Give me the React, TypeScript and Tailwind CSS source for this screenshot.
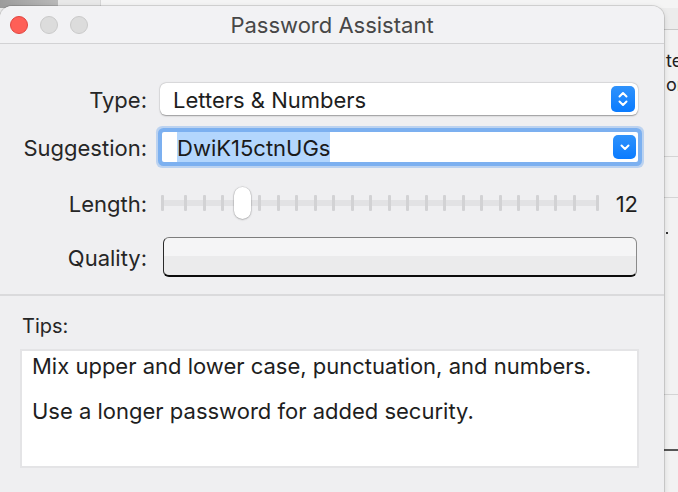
import React from "react";

const ticks = Array.from({ length: 22 });

const Label = ({ children }: { children: React.ReactNode }) => (
  <div className="w-[147px] shrink-0 pt-[2px] text-right text-[22px] text-[#262626] leading-none">{children}</div>
);

export default function App() {
  return (
    <div className="relative w-[678px] h-[492px] overflow-hidden bg-[#ececec] font-['Inter',sans-serif]">
      {/* desktop behind the sheet */}
      <div className="absolute left-0 top-0 h-[8px] w-[58px] bg-[linear-gradient(90deg,#9c9c9c,#b9b9b9)]" />
      <div className="absolute left-[58px] top-0 h-[8px] w-[42px] bg-[#e8e8e8]" />
      <div className="absolute left-[100px] top-0 h-[8px] w-[578px] border-l border-[#d6d6d6] bg-[#f4f4f4]" />
      <div className="absolute right-0 top-[29px] h-[463px] w-[14px] overflow-hidden bg-[#f2f2f2]">
        <div className="border-t border-[#c9c9c9]" />
        <div className="mt-[19px] whitespace-nowrap pl-[2px] text-[18px] leading-[24px] text-[#222]">te</div>
        <div className="mt-[2px] whitespace-nowrap pl-[2px] text-[18px] leading-[20px] text-[#222]">om</div>
        <div className="mt-[61px] border-t border-[#d4d4d4]" />
        <div className="mt-[40px] border-t border-[#d4d4d4]" />
        <div className="mt-[34px] ml-[2px] h-[2px] w-[2px] bg-[#333]" />
        <div className="mt-[160px] border-t border-[#d4d4d4]" />
        <div className="mt-[54px] border-t-2 border-[#555]" />
      </div>

      {/* sheet */}
      <div className="absolute left-0 top-[6px] flex h-[500px] w-[664px] flex-col overflow-hidden rounded-[12px] bg-[#efeff1] shadow-[0_0_0_1px_rgba(0,0,0,0.12),0_2px_6px_rgba(0,0,0,0.15)]">
        <div className="grid h-[38px] shrink-0 grid-cols-[1fr_auto_1fr] items-center border-b border-[#d2d2d4] bg-[#f2f2f4]">
          <div className="flex gap-[12px] pl-[10px]">
            <span className="h-[18px] w-[18px] rounded-full border border-[#e0443e] bg-[#fe5f57]" />
            <span className="h-[18px] w-[18px] rounded-full border border-[#c9c9c9] bg-[#dcdcdc]" />
            <span className="h-[18px] w-[18px] rounded-full border border-[#c9c9c9] bg-[#dcdcdc]" />
          </div>
          <div className="text-[22px] leading-none text-[#474747]">Password Assistant</div>
          <div />
        </div>

        <div className="flex flex-col pt-[39px] pb-[17px] pr-[26px]">
          {/* Type */}
          <div className="flex items-center">
            <Label>Type:</Label>
            <div className="ml-[13px] flex h-[32px] w-[478px] items-center justify-between rounded-[6px] bg-white pl-[13px] pr-[3px] shadow-[0_0.5px_1.5px_rgba(0,0,0,0.35),0_0_0_0.5px_rgba(0,0,0,0.06)]">
              <span className="pt-[2px] text-[22px] leading-none text-[#1e1e1e]">Letters &amp; Numbers</span>
              <span className="flex h-[26px] w-[24px] items-center justify-center rounded-[5px] bg-[linear-gradient(#2f92fb,#0a7bff)]">
                <svg width="12" height="18" viewBox="0 0 12 18" fill="none" stroke="white" strokeWidth="2" strokeLinecap="round" strokeLinejoin="round">
                  <path d="M2.5 6.5 6 3l3.5 3.5" />
                  <path d="M2.5 11.5 6 15l3.5-3.5" />
                </svg>
              </span>
            </div>
          </div>

          {/* Suggestion */}
          <div className="mt-[17px] flex items-center">
            <Label>Suggestion:</Label>
            <div className="ml-[15px] flex h-[30px] w-[476px] items-center justify-between rounded-[2px] bg-white pr-[2px] shadow-[0_0_0_4px_#7cb0f0,0_0_0_6px_rgba(124,176,240,0.45)]">
              <span className="ml-[15px] flex h-[30px] items-center bg-[#b3d6fd] pt-[2px] text-[22px] leading-none text-[#1a1a1a]">DwiK15ctnUGs</span>
              <span className="flex h-[24px] w-[23px] items-center justify-center rounded-[5px] bg-[linear-gradient(#2f92fb,#0a7bff)]">
                <svg width="12" height="10" viewBox="0 0 12 10" fill="none" stroke="white" strokeWidth="2" strokeLinecap="round" strokeLinejoin="round">
                  <path d="M2.5 3.5 6 7l3.5-3.5" />
                </svg>
              </span>
            </div>
          </div>

          {/* Length */}
          <div className="mt-[25px] flex h-[32px] items-center">
            <Label>Length:</Label>
            <div className="relative ml-[14px] flex h-[32px] w-[438px] items-center">
              <div className="absolute left-[1px] right-[1px] top-[13px] h-[6px] rounded-full bg-[#e2e2e4]" />
              <div className="relative flex w-full items-center justify-between">
                <span className="h-[16px] w-[3px] rounded-[1px] bg-[#d2d2d4]" />
                <div className="mx-[20px] flex flex-1 items-center justify-between">
                  {ticks.map((_, i) => (
                    <span key={i} className="h-[16px] w-[3px] rounded-[1px] bg-[#d2d2d4]" />
                  ))}
                </div>
                <span className="h-[16px] w-[3px] rounded-[1px] bg-[#d2d2d4]" />
              </div>
              <div className="absolute left-[73px] top-0 h-[32px] w-[17px] rounded-full bg-white shadow-[0_0.5px_2px_rgba(0,0,0,0.35),0_0_0_0.5px_rgba(0,0,0,0.1)]" />
            </div>
            <div className="ml-auto pt-[2px] text-[22px] leading-none text-[#1e1e1e]">12</div>
          </div>

          {/* Quality */}
          <div className="mt-[18px] flex items-center">
            <Label>Quality:</Label>
            <div className="ml-[16px] h-[40px] w-[474px] rounded-[6px] border-t border-r border-l-[1.5px] border-b-2 border-t-[#7d7d7d] border-r-[#8a8a8a] border-l-[#2a2a2a] border-b-[#0c0c0c] bg-[linear-gradient(#f5f5f6_50%,#ebebec_50%)]" />
          </div>
        </div>

        <div className="border-t-2 border-[#dadadc]" />

        <div className="flex flex-1 flex-col px-[20px] pt-[20px]">
          <div className="pl-[2px] text-[20px] leading-[20px] text-[#262626]">Tips:</div>
          <div className="mt-[13px] h-[119px] w-[619px] border-2 border-[#e4e4e6] bg-white pl-[10px] pt-[2px] text-[22px] text-[#1e1e1e]">
            <p className="leading-[26px]">Mix upper and lower case, punctuation, and numbers.</p>
            <p className="mt-[19px] leading-[26px]">Use a longer password for added security.</p>
          </div>
        </div>
      </div>
    </div>
  );
}
